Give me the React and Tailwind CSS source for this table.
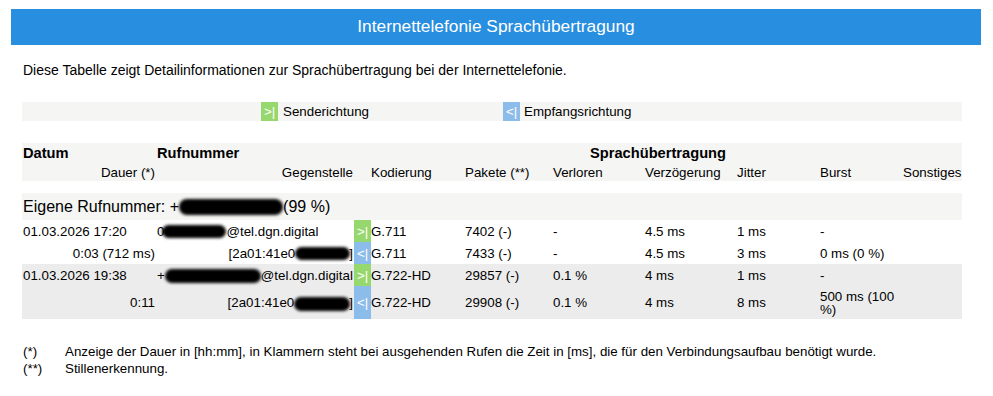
const blob = 'inline-block align-middle rounded-full bg-black blur-[1.5px]';

function Dir({ dir }) {
    const send = dir === 'send';
    return (
        <div className={`flex items-center justify-center text-white ${send ? 'bg-[#97d86e]' : 'bg-[#8bbcea]'}`}>
            {send ? '>|' : '<|'}
        </div>
    );
}

const rows = [
    {
        bg: 'bg-white',
        send: {
            datum: '01.03.2026 17:20',
            nummer: <span>0<span className={`${blob} h-[13px] w-[64px] -ml-[2px]`} />@tel.dgn.digital</span>,
            kod: 'G.711', pakete: '7402 (-)', verloren: '-', verz: '4.5 ms', jitter: '1 ms', burst: '-',
        },
        recv: {
            dauer: '0:03 (712 ms)',
            nummer: <span>[2a01:41e0<span className={`${blob} h-[13px] w-[55px] -mr-[1px]`} />]</span>,
            kod: 'G.711', pakete: '7433 (-)', verloren: '-', verz: '4.5 ms', jitter: '3 ms', burst: '0 ms (0 %)',
        },
    },
    {
        bg: 'bg-[#ececec]',
        send: {
            datum: '01.03.2026 19:38',
            nummer: <span>+<span className={`${blob} h-[14px] w-[96px]`} />@tel.dgn.digital</span>,
            kod: 'G.722-HD', pakete: '29857 (-)', verloren: '0.1 %', verz: '4 ms', jitter: '1 ms', burst: '-',
        },
        recv: {
            dauer: '0:11',
            nummer: <span>[2a01:41e0<span className={`${blob} h-[14px] w-[56px] -mr-[1px]`} />]</span>,
            kod: 'G.722-HD', pakete: '29908 (-)', verloren: '0.1 %', verz: '4 ms', jitter: '8 ms', burst: '500 ms (100 %)',
        },
    },
];

function DataRow({ bg, first, r, dir }) {
    const cell = 'flex items-center py-[3.5px]';
    return (
        <>
            <div className={`${bg} ${cell} ${first ? 'pl-px' : 'justify-end pr-[2px]'}`}>{first ? r.datum : r.dauer}</div>
            <div className={`${bg} ${cell} whitespace-nowrap ${first ? '' : 'justify-end pr-px'}`}>{r.nummer}</div>
            <Dir dir={dir} />
            <div className={`${bg} ${cell}`}>{r.kod}</div>
            <div className={`${bg} ${cell}`}>{r.pakete}</div>
            <div className={`${bg} ${cell}`}>{r.verloren}</div>
            <div className={`${bg} ${cell}`}>{r.verz}</div>
            <div className={`${bg} ${cell}`}>{r.jitter}</div>
            <div className={`${bg} ${cell} leading-[13px] pr-[4px]`}>{r.burst}</div>
            <div className={`${bg} ${cell}`}></div>
        </>
    );
}

export default function App() {
    return (
        <div className="min-h-[396px] bg-white text-black font-['Liberation_Sans',Arial,sans-serif]">
            <div className="pt-[9px] pl-[11px]">
                <div className="w-[970px] h-[36px] bg-[#288ee0] text-white text-[17.33px] flex items-center justify-center">
                    Internettelefonie Sprachübertragung
                </div>
            </div>

            <p className="ml-[23px] mt-[17px] text-[14px] leading-[16px]">
                Diese Tabelle zeigt Detailinformationen zur Sprachübertragung bei der Internettelefonie.
            </p>

            {/* Legend */}
            <div className="ml-[22px] mt-[24px] w-[940px] h-[19px] bg-[#f5f5f3] flex text-[13.33px] leading-[19px] pl-[239px]">
                <div className="flex w-[242px]">
                    <span className="w-[17px] bg-[#97d86e] text-white text-center">&gt;|</span>
                    <span className="ml-[5px]">Senderichtung</span>
                </div>
                <div className="flex">
                    <span className="w-[17px] bg-[#8bbcea] text-white text-center">&lt;|</span>
                    <span className="ml-[4px]">Empfangsrichtung</span>
                </div>
            </div>

            {/* Table */}
            <div className="ml-[22px] mt-[22px] w-[940px] grid grid-cols-[135px_197px_17px_94px_88px_92px_92px_83px_83px_59px] text-[13.33px] leading-[15px]">
                <div className="bg-[#f5f5f3] h-[20px] flex items-center pl-px font-bold text-[14.67px]">Datum</div>
                <div className="bg-[#f5f5f3] h-[20px] flex items-center font-bold text-[14.67px]">Rufnummer</div>
                <div className="col-span-8 bg-[#f5f5f3] h-[20px] flex items-center justify-center font-bold text-[14.67px]">Sprachübertragung</div>

                <div className="bg-[#f5f5f3] h-[18px] flex items-center justify-end pr-[2px]">Dauer (*)</div>
                <div className="bg-[#f5f5f3] h-[18px] flex items-center justify-end pr-px">Gegenstelle</div>
                <div className="bg-[#f5f5f3]"></div>
                <div className="bg-[#f5f5f3] h-[18px] flex items-center">Kodierung</div>
                <div className="bg-[#f5f5f3] h-[18px] flex items-center">Pakete (**)</div>
                <div className="bg-[#f5f5f3] h-[18px] flex items-center">Verloren</div>
                <div className="bg-[#f5f5f3] h-[18px] flex items-center">Verzögerung</div>
                <div className="bg-[#f5f5f3] h-[18px] flex items-center">Jitter</div>
                <div className="bg-[#f5f5f3] h-[18px] flex items-center">Burst</div>
                <div className="bg-[#f5f5f3] h-[18px] flex items-center">Sonstiges</div>

                <div className="col-span-full h-[12px]"></div>

                <div className="col-span-full bg-[#f5f5f3] h-[27px] flex items-center pl-px text-[16px] whitespace-nowrap">
                    Eigene Rufnummer: +<span className={`${blob} h-[16px] w-[104px]`} />(99 %)
                </div>

                {rows.map((row, i) => (
                    <DataRow key={i} bg={row.bg} first r={row.send} dir="send" />
                )).flatMap((el, i) => [el, <DataRow key={'r' + i} bg={rows[i].bg} r={rows[i].recv} dir="recv" />])}
            </div>

            {/* Footnotes */}
            <div className="ml-[23px] mt-[24px] grid grid-cols-[42px_1fr] text-[13.33px] leading-[17px]">
                <span>(*)</span>
                <span>Anzeige der Dauer in [hh:mm], in Klammern steht bei ausgehenden Rufen die Zeit in [ms], die für den Verbindungsaufbau benötigt wurde.</span>
                <span>(**)</span>
                <span>Stillenerkennung.</span>
            </div>
        </div>
    );
}
